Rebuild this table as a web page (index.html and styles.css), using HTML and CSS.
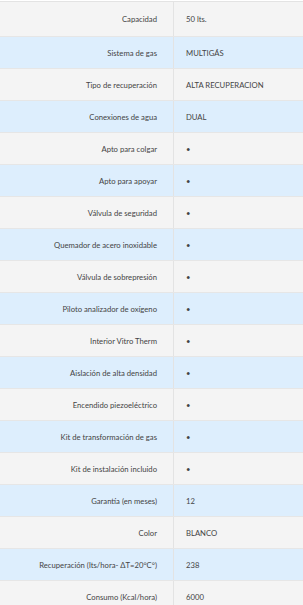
FILE: index.html
```html
<!DOCTYPE html>
<html lang="es">
<head>
<meta charset="utf-8">
<title>Especificaciones</title>
<link rel="stylesheet" href="styles.css">
</head>
<body>
<div class="specs">
  <div class="row"><div class="label">Capacidad</div><div class="value">50 lts.</div></div>
  <div class="row"><div class="label">Sistema de gas</div><div class="value">MULTIGÁS</div></div>
  <div class="row"><div class="label">Tipo de recuperación</div><div class="value">ALTA RECUPERACION</div></div>
  <div class="row"><div class="label">Conexiones de agua</div><div class="value">DUAL</div></div>
  <div class="row"><div class="label">Apto para colgar</div><div class="value">•</div></div>
  <div class="row"><div class="label">Apto para apoyar</div><div class="value">•</div></div>
  <div class="row"><div class="label">Válvula de seguridad</div><div class="value">•</div></div>
  <div class="row"><div class="label">Quemador de acero inoxidable</div><div class="value">•</div></div>
  <div class="row"><div class="label">Válvula de sobrepresión</div><div class="value">•</div></div>
  <div class="row"><div class="label">Piloto analizador de oxígeno</div><div class="value">•</div></div>
  <div class="row"><div class="label">Interior Vitro Therm</div><div class="value">•</div></div>
  <div class="row"><div class="label">Aislación de alta densidad</div><div class="value">•</div></div>
  <div class="row"><div class="label">Encendido piezoeléctrico</div><div class="value">•</div></div>
  <div class="row"><div class="label">Kit de transformación de gas</div><div class="value">•</div></div>
  <div class="row"><div class="label">Kit de instalación incluido</div><div class="value">•</div></div>
  <div class="row"><div class="label">Garantía (en meses)</div><div class="value">12</div></div>
  <div class="row"><div class="label">Color</div><div class="value">BLANCO</div></div>
  <div class="row"><div class="label">Recuperación (lts/hora- ΔT=20°C°)</div><div class="value">238</div></div>
  <div class="row"><div class="label">Consumo (Kcal/hora)</div><div class="value">6000</div></div>
</div>
</body>
</html>
```
FILE: styles.css
```css
html, body {
  margin: 0;
  padding: 0;
  background: #ffffff;
}
body {
  font-family: Lato, "Open Sans", Arial, sans-serif;
  font-size: 7.7px;
  color: #444444;
  padding-top: 1px;
}
.specs {
  border-top: 1px solid #e3e3e3;
}
.row {
  display: flex;
  height: 32px;
  box-sizing: border-box;
  border-bottom: 1px solid #e6e6e6;
  background: #f4f4f4;
}
.row:first-child {
  height: 35px;
}
.row:nth-child(even) {
  background: #ddeefd;
}
.label {
  width: 174px;
  box-sizing: border-box;
  border-right: 1px solid #e3e3e3;
  padding-right: 16px;
  display: flex;
  align-items: center;
  justify-content: flex-end;
  text-align: right;
}
.value {
  flex: 1;
  padding-left: 12px;
  display: flex;
  align-items: center;
}
```
